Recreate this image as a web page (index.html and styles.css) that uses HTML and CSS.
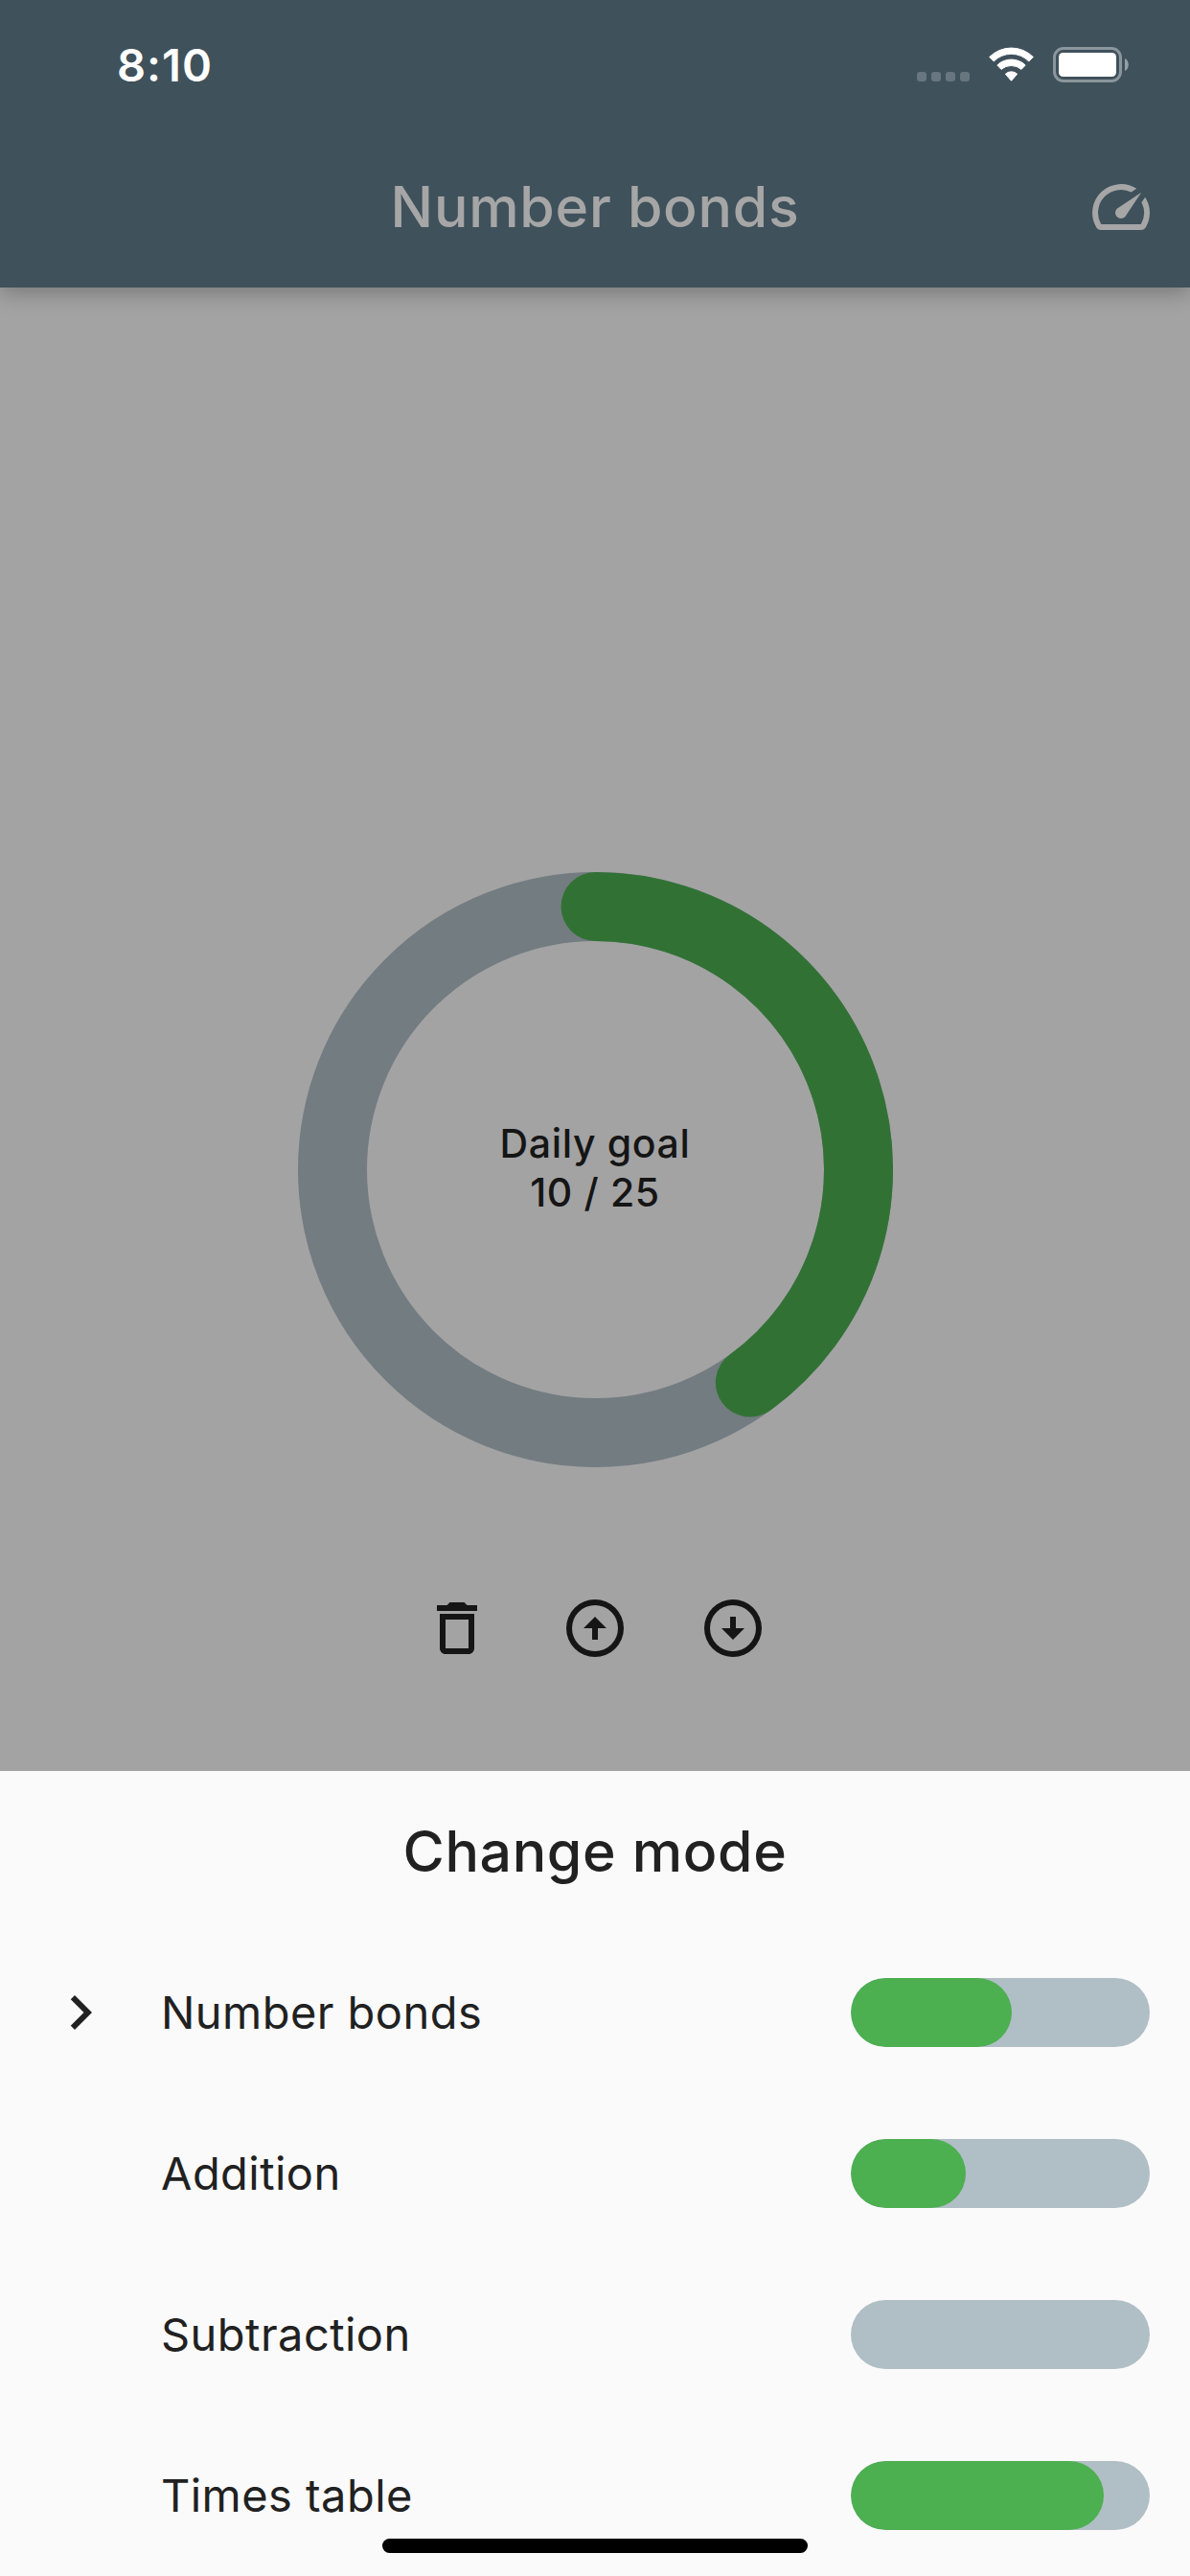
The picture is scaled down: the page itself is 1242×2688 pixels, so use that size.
FILE: index.html
```html
<!DOCTYPE html>
<html lang="en">
<head>
  <meta charset="utf-8">
  <title>Number bonds</title>
  <link rel="stylesheet" href="styles.css">
</head>
<body>
  <div class="screen">
    <header class="top">
      <div class="status">
        <span class="clock">8:10</span>
        <div class="indicators">
          <span class="signal"><i></i><i></i><i></i><i></i></span>
          <svg class="wifi" viewBox="0 0 47 36" width="47" height="36">
            <path d="M.7 10.4A32.5 32.5 0 0 1 46.3 10.4L41.8 15A25.6 25.6 0 0 0 5.2 15Z"/>
            <path d="M8.8 19A21.2 21.2 0 0 1 38.2 19L34 23.4A16 16 0 0 0 13 23.4Z"/>
            <path d="M17.3 28.2A9.3 9.3 0 0 1 29.7 28.2L23.5 35.3Z"/>
          </svg>
          <svg class="battery" viewBox="0 0 79 37" width="79" height="37">
            <rect class="battery-shell" x="1.5" y="1.5" width="69" height="34" rx="9.5"/>
            <rect class="battery-level" x="6" y="6" width="60" height="25" rx="4.5"/>
            <path class="battery-cap" d="M75 12c5 2 5 11 0 13z"/>
          </svg>
        </div>
      </div>
      <div class="appbar">
        <h1 class="title">Number bonds</h1>
        <svg class="icon speed" viewBox="0 0 24 24">
          <path d="M20.38 8.57l-1.23 1.85a8 8 0 0 1-.22 7.58H5.07A8 8 0 0 1 15.58 6.85l1.85-1.23A10 10 0 0 0 3.35 19a2 2 0 0 0 1.72 1h13.85a2 2 0 0 0 1.74-1 10 10 0 0 0-.27-10.44z"/>
          <path d="M10.59 15.41a2 2 0 0 0 2.83 0l5.66-8.49-8.49 5.66a2 2 0 0 0 0 2.83z"/>
        </svg>
      </div>
    </header>

    <main class="content">
      <div class="goal">
        <svg class="ring" viewBox="0 0 621 621">
          <circle class="ring-track" cx="310.5" cy="310.5" r="274.5"/>
          <path class="ring-value" d="M310.5 36A274.5 274.5 0 0 1 471.85 532.58"/>
        </svg>
        <div class="goal-text">
          <div>Daily goal</div>
          <div>10 / 25</div>
        </div>
      </div>
      <div class="actions">
        <svg class="icon" viewBox="0 0 24 24">
          <path d="M6 19c0 1.1.9 2 2 2h8c1.1 0 2-.9 2-2V7H6v12zM8 9h8v10H8V9z"/>
          <path d="M15.5 4l-1-1h-5l-1 1H5v2h14V4z"/>
        </svg>
        <svg class="icon" viewBox="0 0 24 24">
          <path d="M12 2a10 10 0 1 0 0 20 10 10 0 0 0 0-20zm0 18a8 8 0 1 1 0-16 8 8 0 0 1 0 16z"/>
          <path d="M12 8l-4 4h3v4h2v-4h3z"/>
        </svg>
        <svg class="icon" viewBox="0 0 24 24">
          <path d="M12 2a10 10 0 1 0 0 20 10 10 0 0 0 0-20zm0 18a8 8 0 1 1 0-16 8 8 0 0 1 0 16z"/>
          <path d="M12 16l4-4h-3V8h-2v4H8z"/>
        </svg>
      </div>
    </main>

    <section class="sheet">
      <h2 class="sheet-title">Change mode</h2>
      <ul class="modes">
        <li class="mode">
          <svg class="icon" viewBox="0 0 24 24"><path d="M10 6L8.59 7.41 13.17 12l-4.58 4.59L10 18l6-6z"/></svg>
          <span class="label">Number bonds</span>
          <span class="bar"><span class="fill" style="width:168px"></span></span>
        </li>
        <li class="mode">
          <span class="label">Addition</span>
          <span class="bar"><span class="fill" style="width:120px"></span></span>
        </li>
        <li class="mode">
          <span class="label">Subtraction</span>
          <span class="bar"></span>
        </li>
        <li class="mode">
          <span class="label">Times table</span>
          <span class="bar"><span class="fill" style="width:264px"></span></span>
        </li>
      </ul>
    </section>
    <div class="home-indicator"></div>
  </div>
</body>
</html>
```
FILE: styles.css
```css
* {
  box-sizing: border-box;
}

body {
  margin: 0;
  font-family: Inter, "Liberation Sans", sans-serif;
}

h1,
h2,
ul {
  margin: 0;
  padding: 0;
}

.screen {
  position: relative;
  display: flex;
  flex-direction: column;
  width: 1242px;
  height: 2688px;
  overflow: hidden;
  background: #a3a3a3;
}

.icon {
  display: block;
  width: 72px;
  height: 72px;
  fill: currentColor;
}

/* Status bar and app bar */
.top {
  height: 300px;
  background: #3f515b;
  box-shadow: 0 6px 20px rgba(0, 0, 0, 0.25);
}

.status {
  display: flex;
  justify-content: space-between;
  height: 132px;
  padding: 40px 64px 0 122px;
  color: #fff;
}

.clock {
  font-size: 47px;
  font-weight: 600;
  line-height: 55px;
  letter-spacing: 1px;
}

.indicators {
  display: flex;
  align-items: flex-start;
  padding-top: 9px;
}

.signal {
  display: flex;
  gap: 5px;
  margin: 26px 20px 0 0;
}

.signal i {
  width: 10px;
  height: 10px;
  border-radius: 3px;
  background: #68767f;
}

.wifi {
  margin-right: 20px;
  fill: #fff;
  stroke: #fff;
  stroke-width: 1;
  stroke-linejoin: round;
}

.battery-shell {
  fill: none;
  stroke: #8b969c;
  stroke-width: 3;
}

.battery-level {
  fill: #fff;
}

.battery-cap {
  fill: #959fa4;
}

.appbar {
  display: grid;
  grid-template-columns: 108px 1fr 108px;
  align-items: center;
  height: 168px;
  color: #a6a6a6;
}

.title {
  grid-column: 2;
  padding-bottom: 1px;
  font-size: 59px;
  font-weight: 500;
  line-height: 167px;
  letter-spacing: 0.73px;
  text-align: center;
}

/* Daily goal */
.content {
  display: flex;
  flex-direction: column;
  align-items: center;
  height: 1548px;
  padding-top: 609.5px;
  color: #151515;
}

.goal {
  display: grid;
  place-items: center;
  width: 621px;
  height: 621px;
}

.ring,
.goal-text {
  grid-area: 1 / 1;
}

.ring {
  width: 621px;
  height: 621px;
  fill: none;
  stroke-width: 72px;
}

.ring-track {
  stroke: #737c81;
}

.ring-value {
  stroke: #317234;
  stroke-linecap: round;
}

.goal-text {
  padding-bottom: 3px;
  font-size: 41px;
  font-weight: 500;
  line-height: 51px;
  letter-spacing: 0.65px;
  text-align: center;
}

.actions {
  display: flex;
  gap: 72px;
  margin-top: 132.5px;
}

/* Mode sheet */
.sheet {
  height: 840px;
  overflow: hidden;
  background: #fafafa;
  color: #212121;
}

.sheet-title {
  height: 168px;
  font-size: 59px;
  font-weight: 500;
  line-height: 167px;
  letter-spacing: 0.65px;
  text-align: center;
}

.modes {
  list-style: none;
}

.mode {
  display: grid;
  grid-template-columns: 72px 1fr 312px;
  column-gap: 48px;
  align-items: center;
  height: 168px;
  padding: 0 42px 0 48px;
}

.label {
  grid-column: 2;
  padding-bottom: 1px;
  font-size: 47px;
  line-height: 55px;
  letter-spacing: 0.45px;
}

.bar {
  grid-column: 3;
  display: flex;
  height: 72px;
  border-radius: 36px;
  background: #b0bec5;
  overflow: hidden;
}

.fill {
  border-radius: 36px;
  background: #4caf50;
}

.home-indicator {
  position: absolute;
  left: 399px;
  bottom: 24px;
  width: 444px;
  height: 15px;
  border-radius: 8px;
  background: #000;
}
```
